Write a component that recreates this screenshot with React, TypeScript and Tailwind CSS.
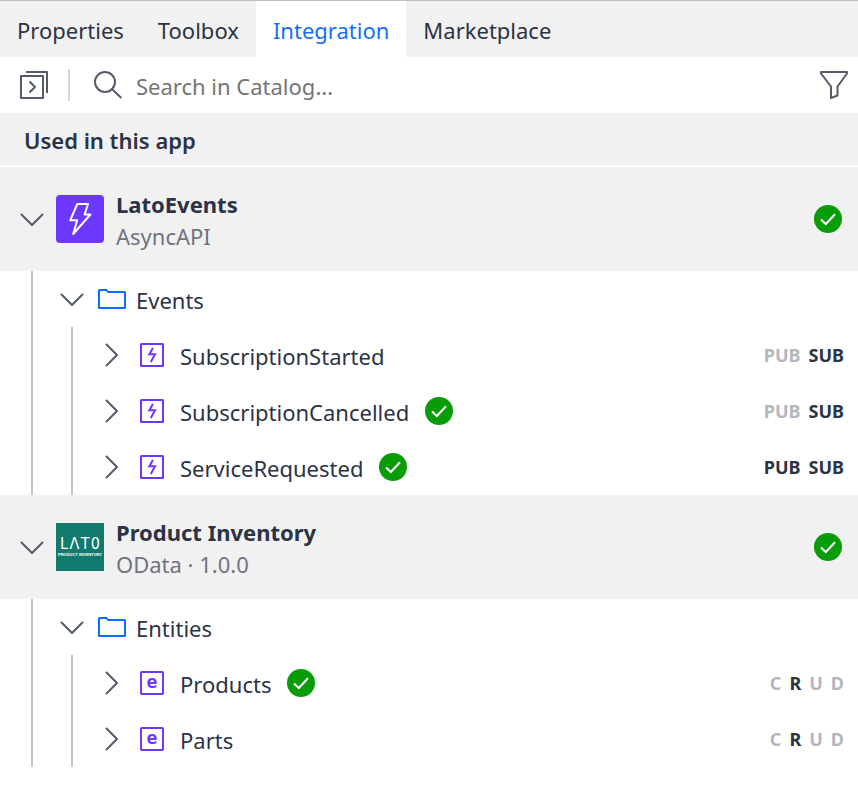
import { useState, type ReactNode } from "react";

function Chevron({ open }: { open: boolean }) {
  return (
    <svg className="size-6 shrink-0" viewBox="0 0 24 24" fill="none" stroke="#555b69" strokeWidth="2" strokeLinecap="round" strokeLinejoin="round" aria-hidden="true">
      <path d={open ? "M1.5 7.5 12 18 22.5 7.5" : "M6.5 1.5 17 12 6.5 22.5"} />
    </svg>
  );
}

function Check() {
  return (
    <svg className="size-7 shrink-0" viewBox="0 0 28 28" fill="none" role="img" aria-label="In use">
      <circle cx="14" cy="14" r="14" fill="#089c08" />
      <path d="M7 14.5 11.8 19 21 9.3" stroke="#fff" strokeWidth="2" />
    </svg>
  );
}

function FolderIcon() {
  return (
    <svg className="h-5 w-7 shrink-0" viewBox="0 0 28 20" fill="none" stroke="#0a6cff" strokeWidth="2" strokeLinejoin="round" aria-hidden="true">
      <path d="M1 1.5Q1 1 1.5 1H8.5L10 3H26.5Q27 3 27 3.5V18.5Q27 19 26.5 19H1.5Q1 19 1 18.5Z" />
    </svg>
  );
}

function EventIcon() {
  return (
    <svg className="size-6 shrink-0" viewBox="0 0 24 24" fill="none" stroke="#6c38ff" strokeWidth="2" strokeLinejoin="round" aria-hidden="true">
      <rect x="1" y="1" width="22" height="22" rx="0.5" />
      <path d="M13 5 9.3 11.3H15L10.8 19" strokeLinejoin="miter" />
    </svg>
  );
}

function EntityIcon() {
  return (
    <span aria-hidden="true" className="flex size-6 shrink-0 items-center justify-center rounded-xs border-2 border-[#6c38ff] pb-0.5 font-['DejaVu_Sans_Mono',monospace] text-[18px] leading-5 font-bold text-[#6c38ff]">
      e
    </span>
  );
}

function AsyncLogo() {
  return (
    <svg className="size-12 shrink-0" viewBox="0 0 48 48" fill="none" aria-hidden="true">
      <rect width="48" height="48" rx="4" fill="#6c38ff" />
      <path d="M21.3 9H32L28.6 19.5H34.4L17.2 39 21.2 25.3H14.2Z" stroke="#fff" strokeWidth="2" strokeLinejoin="round" />
    </svg>
  );
}

function LatoLogo() {
  return (
    <span aria-hidden="true" className="flex size-12 shrink-0 flex-col items-center bg-[#12796d] pt-3 text-white">
      <span className="flex w-10 justify-between font-['DejaVu_Sans_Condensed','DejaVu_Sans',sans-serif] text-[16px] leading-[17px] font-extralight">
        <span>L</span>
        <span>Λ</span>
        <span>T</span>
        <span>0</span>
      </span>
      <span className="font-['Liberation_Sans',sans-serif] text-[4px] leading-[6px] font-bold whitespace-nowrap">PRODUCT INVENTORY</span>
    </span>
  );
}

type Flag = [label: string, on: boolean];
type Item = { name: string; used?: boolean; flags: Flag[] };

function Flags({ flags }: { flags: Flag[] }) {
  return (
    <span className="ml-auto flex gap-2 text-[18px] font-bold">
      {flags.map(([label, on]) => (
        <span key={label} className={on ? "text-[#2b3345]" : "text-[#b5b6bd]"}>
          {label}
        </span>
      ))}
    </span>
  );
}

function ItemRow({ item, icon }: { item: Item; icon: ReactNode }) {
  const [open, setOpen] = useState(false);
  return (
    <li className="flex h-14 items-center pr-3.5 pl-[27px]">
      <button type="button" aria-expanded={open} onClick={() => setOpen(!open)} className="flex items-center gap-4">
        <Chevron open={open} />
        {icon}
        <span className="pt-0.5">{item.name}</span>
      </button>
      {item.used && <span className="ml-4"><Check /></span>}
      <Flags flags={item.flags} />
    </li>
  );
}

type ServiceProps = { name: string; kind: string; logo: ReactNode; folder: string; items: Item[]; icon: ReactNode };

function Service({ name, kind, logo, folder, items, icon }: ServiceProps) {
  const [open, setOpen] = useState(true);
  const [folderOpen, setFolderOpen] = useState(true);
  return (
    <section>
      <header className="flex h-26 items-center justify-between bg-[#f1f1f1] pr-4 pl-5">
        <button type="button" aria-expanded={open} onClick={() => setOpen(!open)} className="flex items-center gap-3 text-left">
          <Chevron open={open} />
          {logo}
          <span className="flex flex-col pt-0.5 leading-8">
            <span className="font-bold">{name}</span>
            <span className="text-[#707380]">{kind}</span>
          </span>
        </button>
        <Check />
      </header>
      {open && (
        <div className="ml-[31px] border-l-2 border-[#c1c1c8]">
          <button type="button" aria-expanded={folderOpen} onClick={() => setFolderOpen(!folderOpen)} className="flex h-14 items-center pl-[27px]">
            <Chevron open={folderOpen} />
            <span className="mr-2.5 ml-3.5"><FolderIcon /></span>
            <span className="pt-0.5">{folder}</span>
          </button>
          {folderOpen && (
            <ul className="ml-[38px] border-l-2 border-[#c1c1c8]">
              {items.map((item) => (
                <ItemRow key={item.name} item={item} icon={icon} />
              ))}
            </ul>
          )}
        </div>
      )}
    </section>
  );
}

const tabs = ["Properties", "Toolbox", "Integration", "Marketplace"];

const events: Item[] = [
  { name: "SubscriptionStarted", flags: [["PUB", false], ["SUB", true]] },
  { name: "SubscriptionCancelled", used: true, flags: [["PUB", false], ["SUB", true]] },
  { name: "ServiceRequested", used: true, flags: [["PUB", true], ["SUB", true]] },
];

const readOnly: Flag[] = [["C", false], ["R", true], ["U", false], ["D", false]];
const entities: Item[] = [
  { name: "Products", used: true, flags: readOnly },
  { name: "Parts", flags: readOnly },
];

export default function App() {
  const [tab, setTab] = useState("Integration");
  return (
    <main className="min-h-screen bg-white font-['Noto_Sans','Open_Sans',sans-serif] text-[22px] text-[#2b3345]">
      <nav role="tablist" className="flex h-[57px] border-t border-[#bfbfc7] bg-[#f1f1f1]">
        {tabs.map((t) => (
          <button
            key={t}
            type="button"
            role="tab"
            aria-selected={t === tab}
            onClick={() => setTab(t)}
            className={`px-[17px] pt-0.5 ${t === tab ? "bg-white text-[#146ff4]" : ""}`}
          >
            {t}
          </button>
        ))}
      </nav>
      <div className="flex h-14 items-center pr-2.5 pl-5">
        <button type="button" aria-label="Collapse pane">
          <svg className="size-7" viewBox="0 0 28 28" fill="none" stroke="#555b69" strokeWidth="2" strokeLinejoin="round">
            <rect x="1" y="5" width="22" height="22" />
            <path d="M6 1H27V22M9.5 10.5 15 16 9.5 21.5" />
          </svg>
        </button>
        <span className="ml-5 h-8 w-0.5 bg-[#d5d5d8]" />
        <label htmlFor="catalog-search" className="ml-6">
          <svg className="size-7" viewBox="0 0 28 28" fill="none" stroke="#555b69" strokeWidth="2" aria-hidden="true">
            <circle cx="11" cy="11" r="10" />
            <path d="M18.5 18.5 27.3 27" />
          </svg>
        </label>
        <input id="catalog-search" type="text" aria-label="Search in Catalog" placeholder="Search in Catalog..." className="ml-3.5 min-w-0 flex-1 pt-0.5 outline-none placeholder:text-[#757575]" />
        <button type="button" aria-label="Filter">
          <svg className="size-7" viewBox="0 0 28 28" fill="none" stroke="#555b69" strokeWidth="2" strokeLinejoin="round">
            <path d="M1 1H27V2.5L17.5 15.5V24.5L11 27V15.5L1 2.5Z" />
          </svg>
        </button>
      </div>
      <h2 className="mb-0.5 flex h-13 items-center bg-[#f1f1f1] px-6 pt-0.5 font-semibold">Used in this app</h2>
      <Service name="LatoEvents" kind="AsyncAPI" logo={<AsyncLogo />} folder="Events" items={events} icon={<EventIcon />} />
      <Service name="Product Inventory" kind="OData · 1.0.0" logo={<LatoLogo />} folder="Entities" items={entities} icon={<EntityIcon />} />
    </main>
  );
}
